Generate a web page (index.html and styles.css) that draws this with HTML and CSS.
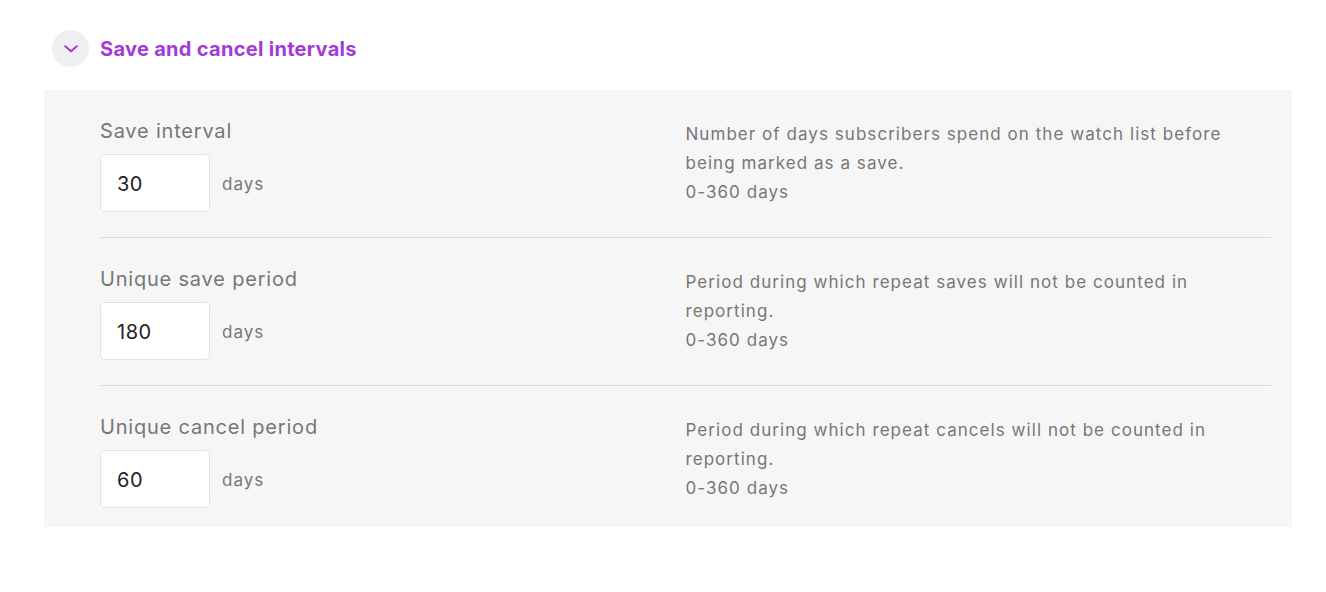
FILE: index.html
```html
<!DOCTYPE html>
<html>
<head>
<meta charset="utf-8">
<link rel="stylesheet" href="styles.css">
</head>
<body>
<div class="page">
  <div class="header">
    <span class="toggle">
      <svg width="14" height="8" viewBox="0 0 14 8"><path d="M1.2 1.2 L7 6.3 L12.8 1.2" fill="none" stroke="#a43ad6" stroke-width="2" stroke-linecap="round" stroke-linejoin="round"/></svg>
    </span>
    <span class="title">Save and cancel intervals</span>
  </div>
  <div class="panel">
    <div class="row">
      <div class="field">
        <div class="label">Save interval</div>
        <div class="control"><div class="input">30</div><span class="unit">days</span></div>
      </div>
      <div class="desc">Number of days subscribers spend on the watch list before being marked as a save.<br>0-360 days</div>
    </div>
    <div class="row">
      <div class="field">
        <div class="label">Unique save period</div>
        <div class="control"><div class="input">180</div><span class="unit">days</span></div>
      </div>
      <div class="desc">Period during which repeat saves will not be counted in reporting.<br>0-360 days</div>
    </div>
    <div class="row last">
      <div class="field">
        <div class="label">Unique cancel period</div>
        <div class="control"><div class="input">60</div><span class="unit">days</span></div>
      </div>
      <div class="desc">Period during which repeat cancels will not be counted in reporting.<br>0-360 days</div>
    </div>
  </div>
</div>
</body>
</html>
```
FILE: styles.css
```css
* { box-sizing: border-box; }
body { margin: 0; background: #fff; font-family: Inter, "Noto Sans", sans-serif; }
.page { padding: 30px 34px 0 44px; }
.header { display: flex; align-items: center; gap: 11px; padding-left: 8px; height: 37px; }
.toggle { width: 37px; height: 37px; border-radius: 50%; background: #efeef1; display: flex; align-items: center; justify-content: center; }
.title { font-size: 20px; font-weight: 700; color: #a43ad6; letter-spacing: 0.3px; }
.panel { margin-top: 23px; background: #f6f6f6; padding: 0 21px 0 56px; }
.row { display: grid; grid-template-columns: 1fr 1fr; padding: 29px 0 25px; border-bottom: 1px solid #dcdcdc; }
.row.last { border-bottom: none; padding-bottom: 19px; }
.label { font-size: 20px; line-height: 24px; color: #777; margin-bottom: 11px; letter-spacing: 0.8px; }
.control { display: flex; align-items: center; }
.input { width: 110px; height: 58px; background: #fff; border: 1px solid #e3e3e3; border-radius: 5px; padding: 1px 0 0 16px; display: flex; align-items: center; font-size: 20px; color: #222; letter-spacing: 0.5px; }
.unit { margin-left: 12px; padding-top: 1px; font-size: 17px; color: #777; letter-spacing: 1px; }
.desc { font-size: 17px; line-height: 29px; color: #777; margin-top: 1px; letter-spacing: 1.05px; }
```
